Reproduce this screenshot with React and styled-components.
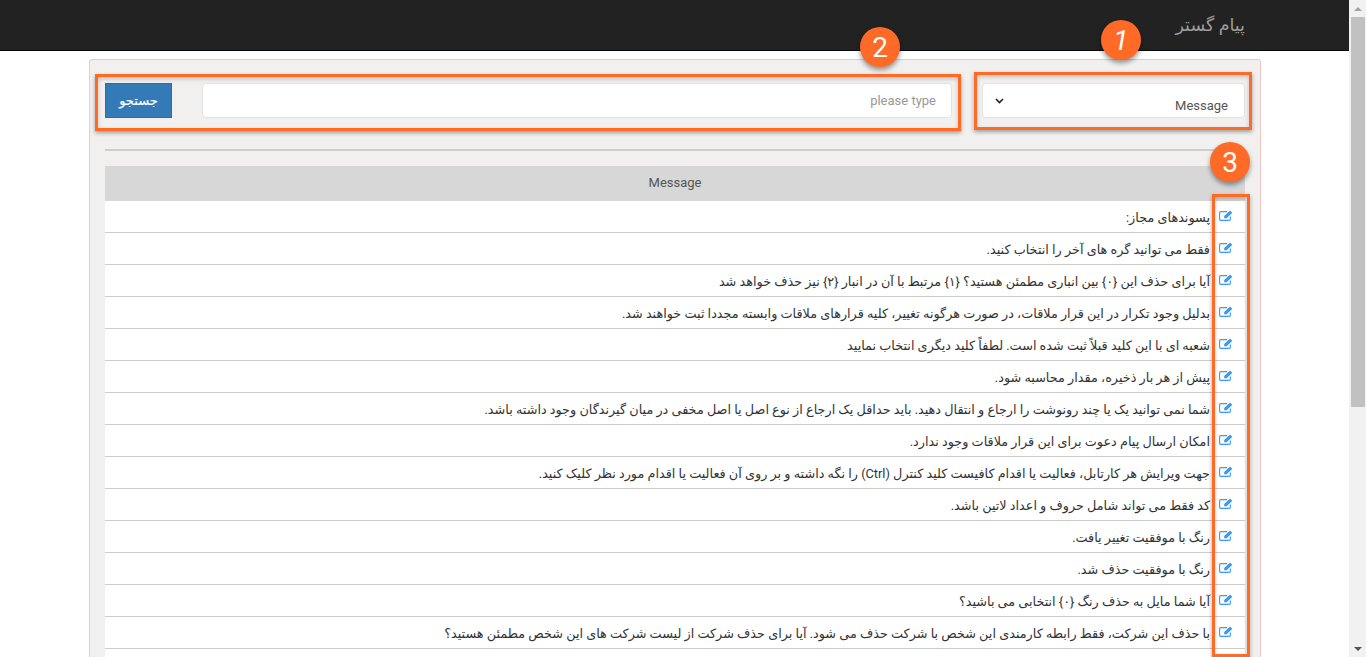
import React from 'react';
import styled, { createGlobalStyle } from 'styled-components';

const messages = [
  'پسوندهای مجاز:',
  'فقط می توانید گره های آخر را انتخاب کنید.',
  'آیا برای حذف این {۰} بین انباری مطمئن هستید؟ {۱} مرتبط با آن در انبار {۲} نیز حذف خواهد شد',
  'بدلیل وجود تکرار در این قرار ملاقات، در صورت هرگونه تغییر، کلیه قرارهای ملاقات وابسته مجددا ثبت خواهند شد.',
  'شعبه ای با این کلید قبلاً ثبت شده است. لطفاً کلید دیگری انتخاب نمایید',
  'پیش از هر بار ذخیره، مقدار محاسبه شود.',
  'شما نمی توانید یک یا چند رونوشت را ارجاع و انتقال دهید. باید حداقل یک ارجاع از نوع اصل یا اصل مخفی در میان گیرندگان وجود داشته باشد.',
  'امکان ارسال پیام دعوت برای این قرار ملاقات وجود ندارد.',
  'جهت ویرایش هر کارتابل، فعالیت یا اقدام کافیست کلید کنترل (Ctrl) را نگه داشته و بر روی آن فعالیت یا اقدام مورد نظر کلیک کنید.',
  'کد فقط می تواند شامل حروف و اعداد لاتین باشد.',
  'رنگ با موفقیت تغییر یافت.',
  'رنگ با موفقیت حذف شد.',
  'آیا شما مایل به حذف رنگ {۰} انتخابی می باشید؟',
  'با حذف این شرکت، فقط رابطه کارمندی این شخص با شرکت حذف می شود. آیا برای حذف شرکت از لیست شرکت های این شخص مطمئن هستید؟',
];

const GlobalStyle = createGlobalStyle`
  html {
    scrollbar-width: none;
  }
  body {
    margin: 0;
    background: #fff;
    font-family: Roboto, "DejaVu Sans", sans-serif;
    font-size: 13px;
    color: #333;
  }
  * {
    box-sizing: border-box;
  }
`;

const Page = styled.div`
  position: relative;
  min-height: 1050px;
  padding-right: 17px;
`;

const Navbar = styled.header`
  height: 51px;
  background: #222;
  border-bottom: 1px solid #080808;
  display: flex;
  justify-content: flex-end;
  align-items: center;
  padding-right: 104px;
`;

const Brand = styled.div`
  direction: rtl;
  color: #9d9d9d;
  font-size: 17.5px;
`;

const Panel = styled.main`
  margin: 8px 88px 0 89px;
  min-height: 960px;
  padding: 23px 15px 15px;
  background: #f1f0ee;
  border: 1px solid #f3c6c6;
  border-radius: 3px;
`;

const SearchRow = styled.form`
  display: flex;
  align-items: stretch;
  height: 35px;
`;

const SearchButton = styled.button`
  width: 67px;
  background: #337ab7;
  border: 1px solid #2e6da4;
  color: #fff;
  font-family: inherit;
  font-weight: 400;
  font-size: 13px;
  -webkit-text-stroke: 0.2px #fff;
  padding: 0;
`;

const SearchInput = styled.input`
  width: 750px;
  margin-left: 30px;
  background: #fff;
  border: 1px solid #e2e2e2;
  border-radius: 4px;
  padding: 0 15px;
  font-family: inherit;
  font-size: 13px;
  text-align: right;

  &::placeholder {
    color: #999;
  }
`;

const SelectBox = styled.div`
  width: 263px;
  margin-left: 30px;
  background: #fff;
  border: 1px solid #e2e2e2;
  border-radius: 4px;
  display: flex;
  align-items: center;
  justify-content: space-between;
  padding: 0 16px 0 12px;
  color: #555;

  span {
    padding-top: 9px;
  }
`;

const Chevron = styled.svg`
  width: 9px;
  height: 6px;
`;

const Divider = styled.hr`
  height: 2px;
  margin: 31px 0 15px;
  border: 0;
  background: #cdcdcd;
`;

const Table = styled.section`
  background: #fff;
  min-height: 600px;
`;

const TableHead = styled.div`
  height: 35px;
  background: #d7d7d7;
  display: flex;
  align-items: center;
  justify-content: center;
  color: #555;
  padding-bottom: 2px;
`;

const Row = styled.div`
  height: 32px;
  direction: rtl;
  display: flex;
  align-items: center;
  border-bottom: 1px solid #ccc;
  padding-right: 12px;
`;

const EditIcon = styled.svg`
  flex: none;
  width: 14px;
  height: 11px;
  margin-left: 9px;
  margin-bottom: 3px;
`;

const RowText = styled.span`
  color: #333;
  font-size: 12.8px;
  padding-top: 2px;
`;

const Highlight = styled.div`
  position: absolute;
  left: ${p => p.$x}px;
  top: ${p => p.$y}px;
  width: ${p => p.$w}px;
  height: ${p => p.$h}px;
  border: 3px solid #ff6a26;
  box-shadow: 0 2px 4px rgba(0, 0, 0, 0.35), inset 0 2px 4px rgba(0, 0, 0, 0.2);
  pointer-events: none;
`;

const Badge = styled.div`
  position: absolute;
  left: ${p => p.$x}px;
  top: ${p => p.$y}px;
  width: 40px;
  height: 40px;
  border-radius: 50%;
  background: #ff6a26;
  box-shadow: 0 3px 5px rgba(0, 0, 0, 0.4);
  color: #fff;
  font-family: Roboto, sans-serif;
  font-style: ${p => (p.$italic ? 'italic' : 'normal')};
  font-size: 28px;
  display: flex;
  align-items: center;
  justify-content: center;
`;

const ScrollRail = styled.div`
  position: fixed;
  top: 0;
  right: 0;
  bottom: 0;
  width: 17px;
  background: #f1f1f1;
  display: flex;
  flex-direction: column;
`;

const ScrollArrow = styled.div`
  height: 17px;
  flex: none;
  display: flex;
  align-items: center;
  justify-content: center;

  &::before {
    content: '';
    border-left: 4px solid transparent;
    border-right: 4px solid transparent;
    border-${p => (p.$down ? 'top' : 'bottom')}: 4px solid ${p => (p.$down ? '#505050' : '#a3a3a3')};
  }
`;

const ScrollThumb = styled.div`
  height: 390px;
  flex: none;
  margin: 0 1px 0 2px;
  background: #c1c1c1;
`;

const ScrollGap = styled.div`
  flex: 1;
`;

const PencilSquare = () => (
  <EditIcon viewBox="0 0 14 11">
    <path
      d="M8 1.6H2a1.4 1.4 0 0 0-1.4 1.4v6a1.4 1.4 0 0 0 1.4 1.4h8a1.4 1.4 0 0 0 1.4-1.4V6.5"
      fill="none"
      stroke="#3b96f5"
      strokeWidth="1.1"
    />
    <path d="M5.2 6L11 .6l2.4 2.2L7.6 8.2H5.2z" fill="#3b96f5" />
  </EditIcon>
);

export default function App() {
  return (
    <Page>
      <GlobalStyle />
      <Navbar>
        <Brand>پیام گستر</Brand>
      </Navbar>
      <Panel>
        <SearchRow onSubmit={e => e.preventDefault()}>
          <SearchButton type="submit">جستجو</SearchButton>
          <SearchInput placeholder="please type" />
          <SelectBox>
            <Chevron viewBox="0 0 9 6">
              <path d="M1 1l3.5 3.5L8 1" fill="none" stroke="#222" strokeWidth="1.6" />
            </Chevron>
            <span>Message</span>
          </SelectBox>
        </SearchRow>
        <Divider />
        <Table>
          <TableHead>Message</TableHead>
          {messages.map(text => (
            <Row key={text}>
              <PencilSquare />
              <RowText>{text}</RowText>
            </Row>
          ))}
        </Table>
      </Panel>
      <Highlight $x={974} $y={72} $w={278} $h={58} />
      <Highlight $x={95} $y={74} $w={866} $h={57} />
      <Highlight $x={1212} $y={194} $w={38} $h={463} />
      <Badge $x={1101} $y={20} $italic>1</Badge>
      <Badge $x={860} $y={27}>2</Badge>
      <Badge $x={1210} $y={142}>3</Badge>
      <ScrollRail>
        <ScrollArrow />
        <ScrollThumb />
        <ScrollGap />
        <ScrollArrow $down />
      </ScrollRail>
    </Page>
  );
}
